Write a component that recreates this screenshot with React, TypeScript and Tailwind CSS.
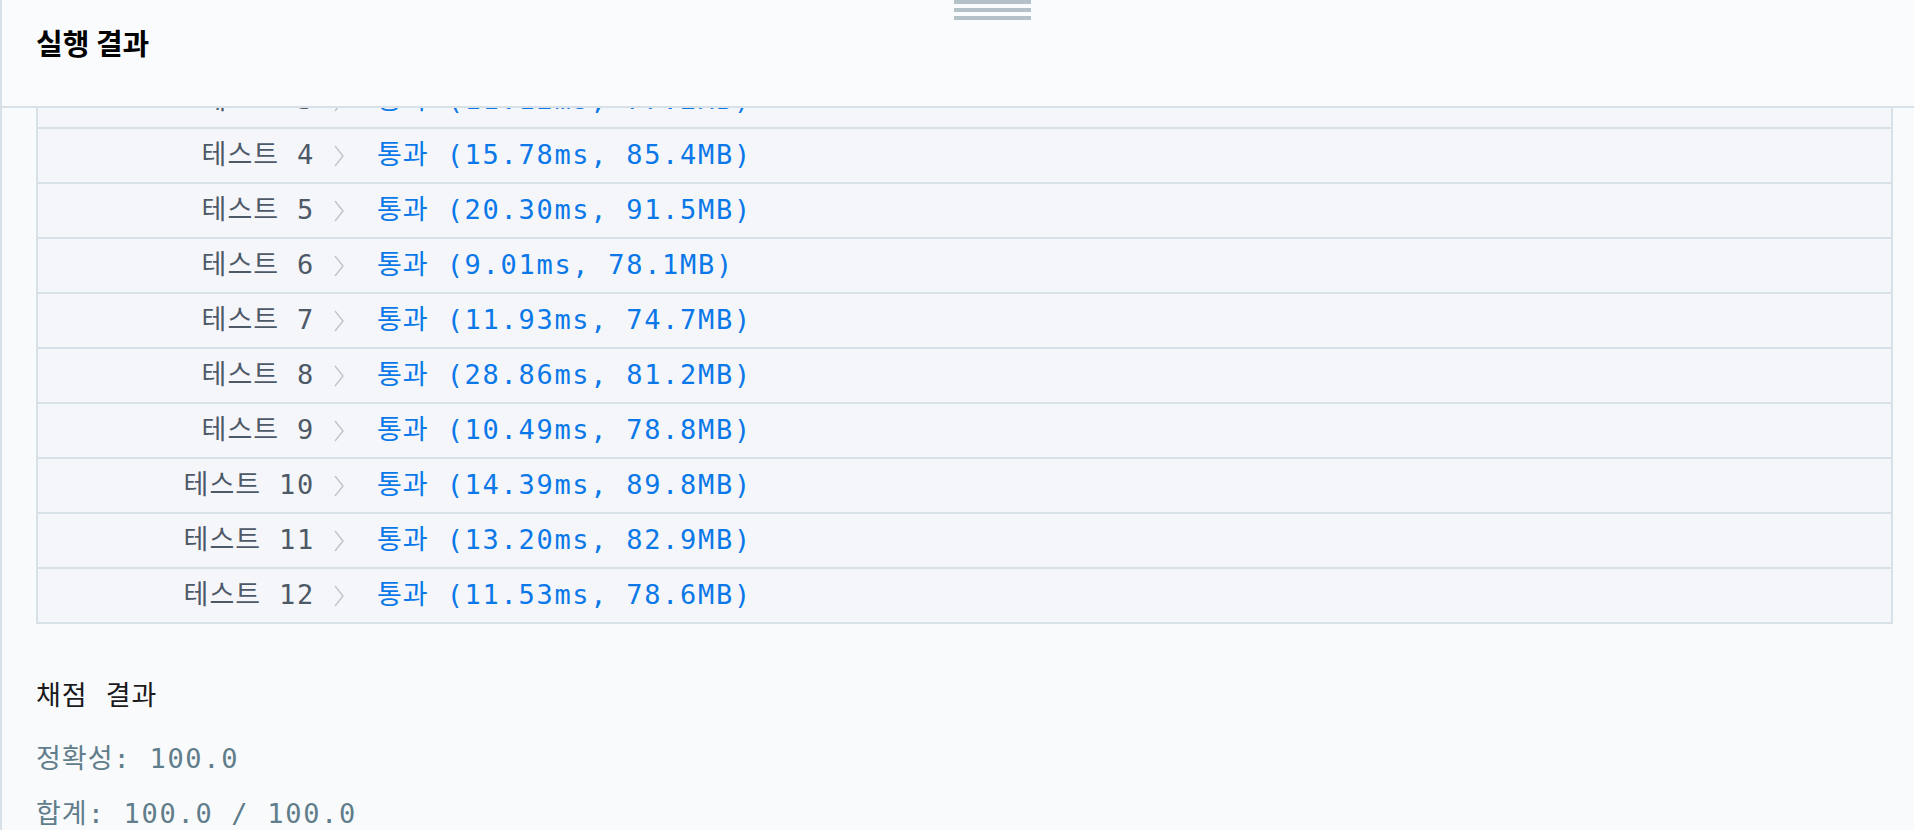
import React from 'react'

const rows = [
    {no: 1, time: '12.41ms', mem: '79.3MB'},
    {no: 2, time: '10.87ms', mem: '76.5MB'},
    {no: 3, time: '11.12ms', mem: '77.2MB'},
    {no: 4, time: '15.78ms', mem: '85.4MB'},
    {no: 5, time: '20.30ms', mem: '91.5MB'},
    {no: 6, time: '9.01ms', mem: '78.1MB'},
    {no: 7, time: '11.93ms', mem: '74.7MB'},
    {no: 8, time: '28.86ms', mem: '81.2MB'},
    {no: 9, time: '10.49ms', mem: '78.8MB'},
    {no: 10, time: '14.39ms', mem: '89.8MB'},
    {no: 11, time: '13.20ms', mem: '82.9MB'},
    {no: 12, time: '11.53ms', mem: '78.6MB'},
]

function Ko({children}: {children: React.ReactNode}) {
    return <span className="font-['Noto_Sans_CJK_KR',sans-serif] text-[27px] tracking-[1px]">{children}</span>
}

function Row({no, time, mem}: any) {
    return (
        <div className="h-[55px] border-t-2 border-[#d8e0e8] flex items-center pb-[4px]">
            <span className="w-[277px] text-right text-[#4e5968] whitespace-pre">
                <Ko>테스트</Ko>{` ${no}`}
            </span>
            <svg className="ml-[19px] mt-[4px] shrink-0" width="10" height="22" viewBox="0 0 10 22" fill="none">
                <polyline points="1,1 9,11 1,21" stroke="#bcc4cc" strokeWidth="1.4" />
            </svg>
            <span className="ml-[33px] text-[#0a78e8] whitespace-pre">
                <Ko>통과</Ko>{` (${time}, ${mem})`}
            </span>
        </div>
    )
}

export default function App() {
    return (
        <div className="h-[830px] w-full overflow-hidden flex flex-col border-l-2 border-[#d8e0e8] bg-[#f9fafc] font-['DejaVu_Sans_Mono','Noto_Sans_CJK_KR',monospace] text-[27px] tracking-[1.7px] leading-none">
            <div className="relative h-[108px] shrink-0 border-b-2 border-[#d8e0e8] bg-[#fafbfd] pl-[34px] pt-[22px] z-10">
                <div className="absolute left-[952px] top-0 flex flex-col gap-[4px]">
                    <div className="w-[77px] h-[4px] bg-[#b5c1c8]" />
                    <div className="w-[77px] h-[4px] bg-[#b5c1c8]" />
                    <div className="w-[77px] h-[4px] bg-[#b5c1c8]" />
                </div>
                <h2 className="font-['Noto_Sans_CJK_KR',sans-serif] font-bold text-[29px] leading-[40px] tracking-normal text-black">실행 결과</h2>
            </div>
            <div className="flex-1 overflow-hidden pl-[34px] pr-[21px]">
                <div className="-mt-[146px] border-x-2 border-b-2 border-[#d8e0e8] bg-[#f5f6fa]">
                    {rows.map((r) => <Row key={r.no} {...r} />)}
                </div>
                <div className="pt-[47px]">
                    <h3 className="leading-[46px] text-[#1b1b1b] whitespace-pre"><Ko>채점</Ko> <Ko>결과</Ko></h3>
                    <div className="mt-[11px] leading-[53px] text-[#607d8b] whitespace-pre"><Ko>정확성</Ko>: 100.0</div>
                    <div className="leading-[53px] text-[#607d8b] whitespace-pre"><Ko>합계</Ko>: 100.0 / 100.0</div>
                </div>
            </div>
        </div>
    )
}
